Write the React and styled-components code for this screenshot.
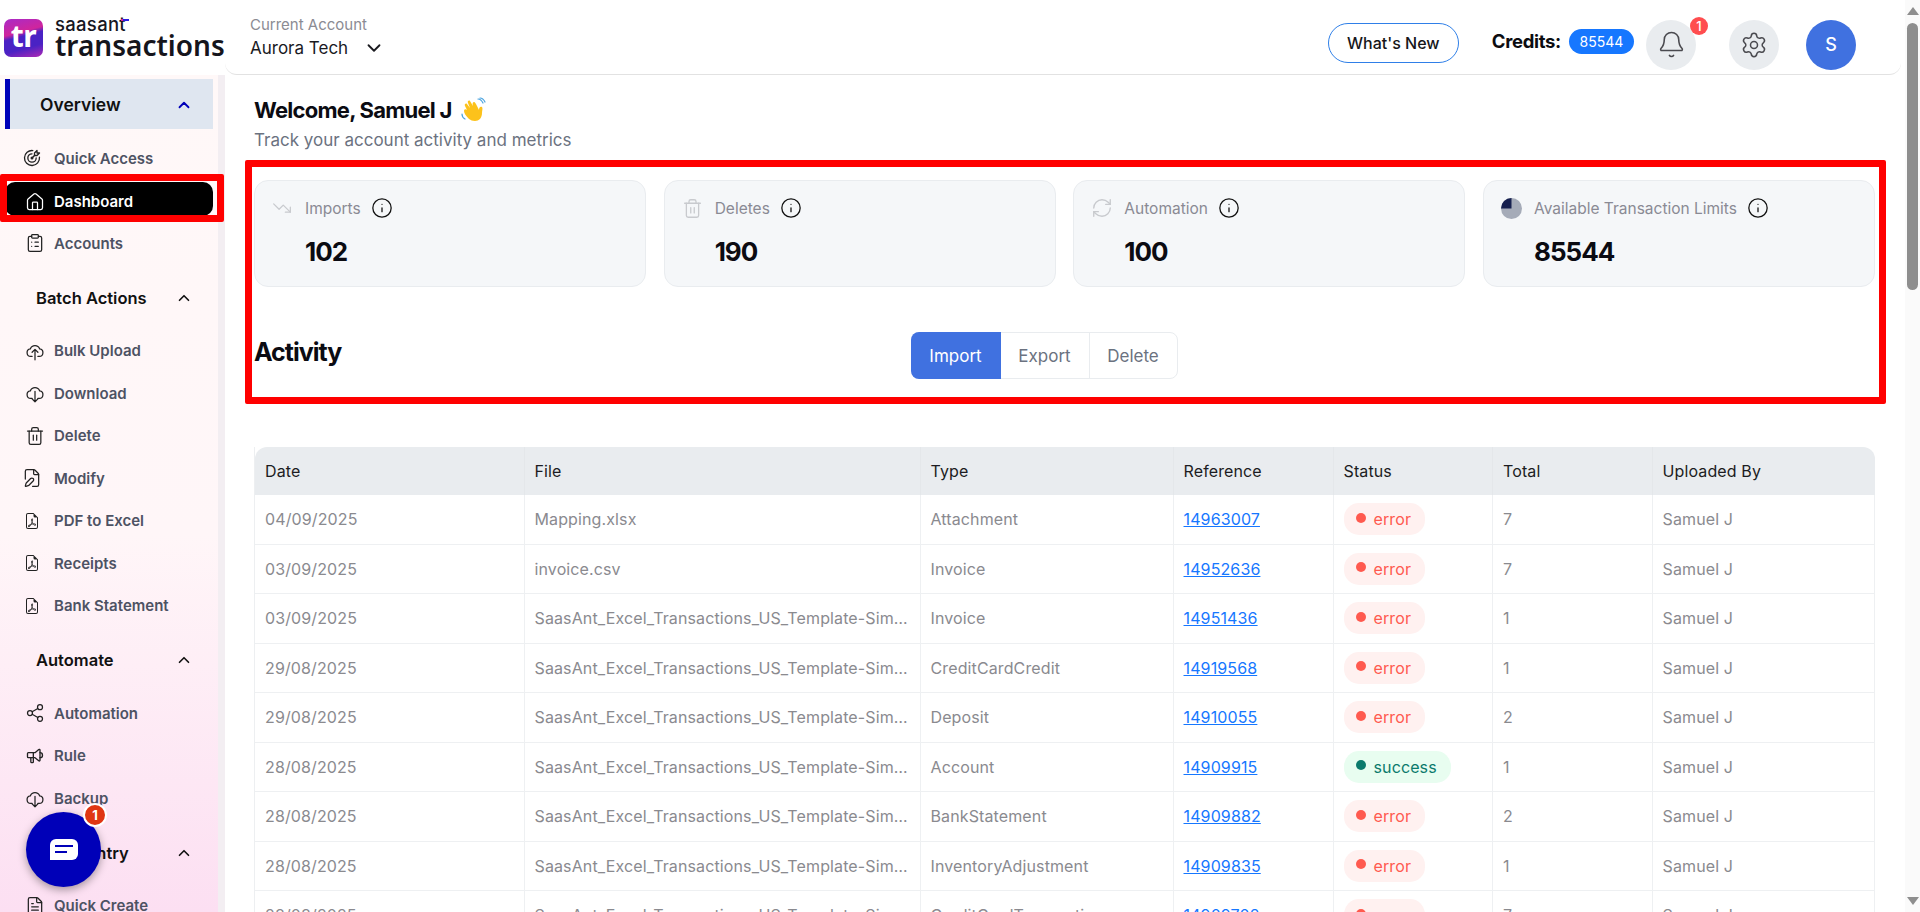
import React from "react";
import styled, { createGlobalStyle } from "styled-components";
import {
  Home, ClipboardList, Trash2, FilePen, Share2, FileText, ChevronUp, ChevronDown,
  Bell, Settings, Info, TrendingDown, RefreshCw,
} from "lucide-react";
import { TbTargetArrow, TbSpeakerphone } from "react-icons/tb";
import { BsFileEarmarkPdf } from "react-icons/bs";

const Global = createGlobalStyle`
  html, body { margin: 0; padding: 0; height: 100%; overflow: hidden; background: #fff; }
  body { font-family: Inter, "Liberation Sans", sans-serif; color: #111; }
  *, *::before, *::after { box-sizing: border-box; }
`;

const Page = styled.div`
  display: flex;
  width: 100%;
  height: 912px;
  overflow: hidden;
`;
const Shell = styled.div`
  flex: 1;
  min-width: 0;
  display: grid;
  grid-template-columns: 225px 1fr;
  grid-template-rows: 75px 837px;
`;

/* Brand */
const Brand = styled.div`
  display: flex;
  align-items: center;
  gap: 12px;
  padding: 0 0 0 4px;
  background: #fff;
`;
const LogoTile = styled.div`
  width: 39px;
  height: 38px;
  border-radius: 7px;
  display: flex;
  align-items: center;
  justify-content: center;
  color: #fff;
  font: 700 30px/1 "Noto Sans", sans-serif;
  letter-spacing: -0.5px;
  padding-bottom: 4px;
  background: linear-gradient(165deg, #a92bc8 0%, #d0259c 36%, #4a22c4 46%, #4a22c4 72%, #b02ab4 100%);
`;
const Wordmark = styled.div`
  display: flex;
  flex-direction: column;
`;
const Saasant = styled.span`
  position: relative;
  align-self: flex-start;
  font: 500 18.5px/15px Inter, sans-serif;
  letter-spacing: 0.3px;
  color: #17171f;
  &::after {
    content: "";
    position: absolute;
    right: -3px;
    top: 2px;
    width: 8px;
    height: 1.5px;
    background: linear-gradient(90deg, #e0249a 30%, #2a1ee0 30%);
  }
`;
const BrandName = styled.span`
  font: 600 28px/26px "Noto Sans", sans-serif;
  color: #15151c;
`;

/* Top bar */
const TopBar = styled.header`
  display: flex;
  align-items: center;
  margin-right: 4px;
  padding: 0 45px 0 25px;
  background: #fff;
  border-bottom: 1px solid #e2e2e2;
  border-radius: 0 0 12px 12px;
`;
const Account = styled.div`
  display: flex;
  flex-direction: column;
  gap: 3px;
  margin-top: 1px;
`;
const AccountLabel = styled.span`
  font-size: 15px;
  line-height: 18px;
  color: #8b8b93;
`;
const AccountName = styled.span`
  display: flex;
  align-items: center;
  gap: 15px;
  font-size: 17px;
  line-height: 21px;
  color: #1a1a1f;
`;
const Spacer = styled.div`
  flex: 1;
`;
const WhatsNew = styled.button`
  width: 131px;
  height: 40px;
  margin-top: 11px;
  margin-right: 33px;
  border: 1px solid #2f7fe8;
  border-radius: 20px;
  background: #fff;
  color: #16161a;
  font: 500 16px Inter, sans-serif;
`;
const Credits = styled.span`
  font-size: 18.5px;
  font-weight: 700;
  letter-spacing: -0.3px;
  color: #0c0c10;
  margin-right: 8px;
  margin-top: 8px;
`;
const CreditBadge = styled.span`
  width: 65px;
  height: 25px;
  margin-top: 9px;
  margin-right: 12px;
  border-radius: 13px;
  background: #1677ff;
  color: #fff;
  font-size: 14px;
  display: flex;
  align-items: center;
  justify-content: center;
`;
const RoundButton = styled.div`
  position: relative;
  width: 50px;
  height: 50px;
  border-radius: 50%;
  margin-right: ${(p) => p.$mr}px;
  margin-top: 15px;
  background: ${(p) => p.$bg || "#e9ecef"};
  color: ${(p) => p.$fg || "#4a4a4f"};
  font-size: 18px;
  font-weight: 500;
  display: flex;
  align-items: center;
  justify-content: center;
`;
const BellCount = styled.span`
  position: absolute;
  top: -3px;
  right: -12px;
  width: 18px;
  height: 18px;
  border-radius: 50%;
  background: #ff4d4f;
  color: #fff;
  font-size: 13px;
  font-weight: 500;
  display: flex;
  align-items: center;
  justify-content: center;
`;

/* Sidebar */
const Sidebar = styled.aside`
  display: flex;
  height: 837px;
  overflow: hidden;
  background: linear-gradient(180deg, #fff8f8 0%, #fff6f8 55%, #fcdff2 100%);
`;
const SideList = styled.nav`
  flex: 1;
  min-width: 0;
  padding-top: 4px;
`;
const SideTrack = styled.div`
  width: 7px;
  background: #f3eef2;
`;
const ActiveGroup = styled.div`
  display: flex;
  align-items: center;
  justify-content: space-between;
  height: 50px;
  width: 208px;
  margin: 0 0 8px 5px;
  padding: 1px 20px 0 30px;
  background: #dfe6f0;
  border-left: 5px solid #0000b8;
  font-size: 17.5px;
  font-weight: 600;
  color: #111;
`;
const GroupTitle = styled.div`
  display: flex;
  align-items: center;
  justify-content: space-between;
  height: 48px;
  margin: 9px 0 8px;
  padding: 0 25px 0 36px;
  font-size: 16.5px;
  font-weight: 600;
  color: #111;
`;
const NavRow = styled.div`
  display: flex;
  align-items: center;
  gap: 9px;
  height: 42.5px;
  padding-left: 25px;
  font-size: 15px;
  font-weight: 600;
  color: #4d5263;
`;
const NavIcon = styled.span`
  flex: none;
  width: 20px;
  display: flex;
  justify-content: center;
  color: ${(p) => (p.$light ? "#fff" : "#222")};
  transform: translateX(${(p) => p.$dx || 0}px);
`;
const ActiveFrame = styled.div`
  position: relative;
  height: 42.5px;
  padding-top: 2.5px;
  &::after {
    content: "";
    position: absolute;
    left: 0;
    top: -5.5px;
    width: 224px;
    height: 48px;
    border: 7px solid #ff0000;
    border-radius: 2px;
    pointer-events: none;
  }
`;
const ActiveRow = styled.div`
  display: flex;
  align-items: center;
  gap: 9px;
  height: 34px;
  width: 208px;
  margin-left: 5px;
  padding: 5px 0 0 20px;
  background: #000;
  border-radius: 10px;
  color: #fff;
  font-size: 15px;
  font-weight: 600;
`;

/* Chat launcher */
const ChatBubble = styled.div`
  position: absolute;
  left: 26px;
  top: 812px;
  width: 75px;
  height: 75px;
  border-radius: 50%;
  background: #0000b8;
  box-shadow: 0 3px 8px rgba(0, 0, 0, 0.35);
  display: flex;
  align-items: center;
  justify-content: center;
  z-index: 3;
`;
const ChatCount = styled.span`
  position: absolute;
  top: -9px;
  right: -6px;
  width: 24px;
  height: 24px;
  border-radius: 50%;
  border: 2px solid #fff;
  background: #e03613;
  color: #fff;
  font-size: 13px;
  font-weight: 700;
  display: flex;
  align-items: center;
  justify-content: center;
`;

/* Main */
const Main = styled.main`
  min-width: 0;
  height: 837px;
  overflow: hidden;
  padding: 21px 30px 0 30px;
  background: #fff;
`;
const Welcome = styled.h1`
  display: flex;
  align-items: center;
  gap: 9px;
  margin: 0 0 0 -1px;
  height: 28px;
  font-size: 22px;
  font-weight: 700;
  letter-spacing: -0.75px;
  color: #0b0b12;
`;
const Subtitle = styled.p`
  margin: 4px 0 0 -1px;
  height: 24px;
  font-size: 17px;
  line-height: 24px;
  color: #6b7280;
`;
const Highlight = styled.section`
  position: relative;
  margin: 28px 0 0 -1px;
  &::after {
    content: "";
    position: absolute;
    left: -9px;
    right: -11px;
    top: -20px;
    bottom: -25px;
    border: 7px solid #ff0000;
    border-radius: 2px;
    pointer-events: none;
  }
`;
const Cards = styled.div`
  display: grid;
  grid-template-columns: repeat(4, 1fr);
  gap: 17.67px;
`;
const Card = styled.div`
  height: 107px;
  padding: 15px 18px 0 17px;
  background: #f5f7f9;
  border: 1px solid #e9ecef;
  border-radius: 14px;
`;
const CardHead = styled.div`
  display: flex;
  align-items: center;
  height: 24px;
  font-size: 15.5px;
  color: #8a8a94;
`;
const CardIcon = styled.span`
  width: 33px;
  display: flex;
  color: #c8cace;
`;
const InfoIcon = styled(Info)`
  margin-left: 10px;
  color: #111;
`;
const CardValue = styled.div`
  margin: 16px 0 0 33px;
  font-size: 26px;
  line-height: 31px;
  font-weight: 700;
  letter-spacing: -1px;
  color: #0b0b12;
`;
const ActivityRow = styled.div`
  position: relative;
  display: flex;
  justify-content: center;
  margin-top: 45px;
  padding-right: 41px;
`;
const ActivityTitle = styled.h2`
  position: absolute;
  left: 0;
  top: 5px;
  margin: 0;
  font-size: 25px;
  line-height: 31px;
  font-weight: 700;
  letter-spacing: -1px;
  color: #0b0b12;
`;
const Tabs = styled.div`
  display: flex;
  height: 47px;
  border: 1px solid #e9ecef;
  border-radius: 8px;
`;
const Tab = styled.div`
  width: ${(p) => p.$w}px;
  display: flex;
  align-items: center;
  justify-content: center;
  font-size: 17px;
  color: ${(p) => (p.$active ? "#fff" : "#6b7280")};
  background: ${(p) => (p.$active ? "#4071e0" : "transparent")};
  border-radius: ${(p) => (p.$active ? "8px 0 0 8px" : "0")};
  margin: ${(p) => (p.$active ? "-1px 0 -1px -1px" : "0")};
  border-left: ${(p) => (p.$divided ? "1px solid #e9ecef" : "0")};
`;
const Table = styled.table`
  width: 1620px;
  margin: 68px 0 0 -1px;
  table-layout: fixed;
  border-collapse: separate;
  border-spacing: 0;
  font-size: 16px;
  letter-spacing: 0.12px;
  border-left: 1px solid #edeff1;
`;
const Th = styled.th`
  height: 48px;
  padding: 0 10px;
  text-align: left;
  font-weight: 400;
  color: #1c1c22;
  background: #e9ecef;
  &:first-child { border-top-left-radius: 12px; }
  &:last-child { border-top-right-radius: 12px; }
  & + & { border-left: 1px solid #e4e7ea; }
`;
const Td = styled.td`
  height: 49.5px;
  padding: 0 10px;
  color: #8a8a8f;
  white-space: nowrap;
  overflow: hidden;
  text-overflow: ellipsis;
  border-bottom: 1px solid #eef0f2;
  & + & { border-left: 1px solid #eef0f2; }
  &:last-child { border-right: 1px solid #eef0f2; }
`;
const RefLink = styled.a`
  color: #1677ff;
  text-decoration: underline;
`;
const Status = styled.span`
  display: inline-flex;
  align-items: center;
  gap: 8px;
  height: 32px;
  padding: 0 14px 0 12px;
  border-radius: 15px;
  background: ${(p) => (p.$ok ? "#e8fdf0" : "#fff1f0")};
  color: ${(p) => (p.$ok ? "#0b7a6c" : "#ff5a4f")};
  vertical-align: middle;
  &::before {
    content: "";
    width: 10px;
    height: 10px;
    margin-top: -3px;
    border-radius: 50%;
    background: currentColor;
  }
`;

/* Window scrollbar as shown in the picture */
const ScrollRail = styled.div`
  flex: none;
  width: 15px;
  height: 912px;
  display: flex;
  flex-direction: column;
  align-items: center;
  background: #fafafa;
`;
const ScrollArrowUp = styled.div`
  margin-top: 7px;
  border-left: 6px solid transparent;
  border-right: 6px solid transparent;
  border-bottom: 8px solid #8e8e8e;
`;
const ScrollThumb = styled.div`
  width: 11px;
  height: 267px;
  margin-top: 8px;
  border-radius: 6px;
  background: #8e8e8e;
`;
const ScrollArrowDown = styled.div`
  margin-top: auto;
  margin-bottom: 7px;
  border-left: 6px solid transparent;
  border-right: 6px solid transparent;
  border-top: 8px solid #8e8e8e;
`;

const Wave = () => (
  <svg width="26" height="26" viewBox="0 0 26 26" aria-hidden="true">
    <path d="M8 22c-3-3-5-6-5-8s2-2 3-1l-2-4c-1-2 1-3 2-2l3 4-2-5c-1-2 1-3 2-2l3 5c-1-3 0-4 1-4s2 2 3 4l2 4c0-2 1-4 3-3 1 1 0 4 0 6 0 5-3 8-7 8-3 0-4-1-6-2z" fill="#fcc21b" />
    <path d="M17 2c2 0 4 2 5 4M19 1c2 0 4 2 5 4M1 17c0 2 1 4 3 5" stroke="#4aa3df" strokeWidth="1.2" fill="none" strokeLinecap="round" />
  </svg>
);
const Pie = () => (
  <svg width="21" height="21" viewBox="0 0 22 22" aria-hidden="true">
    <circle cx="11" cy="11" r="11" fill="#a5abb8" />
    <path d="M11 11V0A11 11 0 0 0 0 11z" fill="#16204f" />
  </svg>
);
const ChatGlyph = () => (
  <svg width="28" height="21" viewBox="0 0 28 21" aria-hidden="true">
    <path d="M6 0h16a6 6 0 0 1 6 6v9a6 6 0 0 1-6 6H0V6a6 6 0 0 1 6-6z" fill="#fff" />
    <path d="M5 7h18M5 13h12" stroke="#0000b8" strokeWidth="2" />
  </svg>
);
const CLOUD = "M8.5 18.5H7a4.5 4.5 0 0 1-.6-8.96 6 6 0 0 1 11.2 0A4.5 4.5 0 0 1 17 18.5h-1.5";
const CloudUp = ({ size }) => (
  <svg width={size} height={size} viewBox="0 0 24 24" fill="none" stroke="currentColor" strokeWidth="1.5" strokeLinecap="round" strokeLinejoin="round" aria-hidden="true">
    <path d={CLOUD} />
    <path d="M12 22.5V10M8.5 13.5 12 10l3.5 3.5" />
  </svg>
);
const CloudDown = ({ size }) => (
  <svg width={size} height={size} viewBox="0 0 24 24" fill="none" stroke="currentColor" strokeWidth="1.5" strokeLinecap="round" strokeLinejoin="round" aria-hidden="true">
    <path d={CLOUD} />
    <path d="M12 10v12.5M8.5 19l3.5 3.5 3.5-3.5" />
  </svg>
);
const Pdf = ({ size }) => <BsFileEarmarkPdf size={size} />;

const Lined = (Icon, w) => ({ size }) => <Icon size={size} strokeWidth={w} />;
const NavItem = ({ icon: Icon, label, size = 22, dx }) => (
  <NavRow>
    <NavIcon $dx={dx}><Icon size={size} /></NavIcon>
    {label}
  </NavRow>
);

const Group = ({ title }) => (
  <GroupTitle>
    {title}
    <ChevronUp size={18} strokeWidth={2.2} />
  </GroupTitle>
);

const LONG = "SaasAnt_Excel_Transactions_US_Template-Simple.xlsx";
const rows = [
  ["04/09/2025", "Mapping.xlsx", "Attachment", "14963007", "error", "7"],
  ["03/09/2025", "invoice.csv", "Invoice", "14952636", "error", "7"],
  ["03/09/2025", LONG, "Invoice", "14951436", "error", "1"],
  ["29/08/2025", LONG, "CreditCardCredit", "14919568", "error", "1"],
  ["29/08/2025", LONG, "Deposit", "14910055", "error", "2"],
  ["28/08/2025", LONG, "Account", "14909915", "success", "1"],
  ["28/08/2025", LONG, "BankStatement", "14909882", "error", "2"],
  ["28/08/2025", LONG, "InventoryAdjustment", "14909835", "error", "1"],
  ["28/08/2025", LONG, "CreditCardTransaction", "14909702", "error", "7"],
];
const widths = [268.5, 396, 253, 160, 159.5, 159.5, 223.5];
const heads = ["Date", "File", "Type", "Reference", "Status", "Total", "Uploaded By"];

const TargetI = Lined(TbTargetArrow, 1.6);
const ClipI = Lined(ClipboardList, 1.5);
const TrashI = Lined(Trash2, 1.5);
const PenI = Lined(FilePen, 1.5);
const ShareI = Lined(Share2, 1.5);
const HornI = Lined(TbSpeakerphone, 1.6);
const FileI = Lined(FileText, 1.5);

const stats = [
  [<TrendingDown key="a" size={20} strokeWidth={1.5} />, "Imports", "102"],
  [<Trash2 key="b" size={21} strokeWidth={1.5} />, "Deletes", "190"],
  [<RefreshCw key="c" size={22} strokeWidth={1.5} />, "Automation", "100"],
  [<Pie key="d" />, "Available Transaction Limits", "85544"],
];

export default function App() {
  return (
    <>
      <Global />
      <Page>
        <Shell>
          <Brand>
            <LogoTile>tr</LogoTile>
            <Wordmark>
              <Saasant>saasant</Saasant>
              <BrandName>transactions</BrandName>
            </Wordmark>
          </Brand>
          <TopBar>
            <Account>
              <AccountLabel>Current Account</AccountLabel>
              <AccountName>
                Aurora Tech <ChevronDown size={22} strokeWidth={2} />
              </AccountName>
            </Account>
            <Spacer />
            <WhatsNew>What's New</WhatsNew>
            <Credits>Credits:</Credits>
            <CreditBadge>85544</CreditBadge>
            <RoundButton $mr={33}>
              <Bell size={29} strokeWidth={1.3} />
              <BellCount>1</BellCount>
            </RoundButton>
            <RoundButton $mr={27}>
              <Settings size={28} strokeWidth={1.3} />
            </RoundButton>
            <RoundButton $mr={0} $bg="#4071e0" $fg="#fff">S</RoundButton>
          </TopBar>
          <Sidebar>
            <SideList>
              <ActiveGroup>
                Overview
                <ChevronUp size={18} strokeWidth={2.4} color="#0000b8" />
              </ActiveGroup>
              <NavItem icon={TargetI} label="Quick Access" dx={-3} />
              <ActiveFrame>
                <ActiveRow>
                  <NavIcon $light><Home size={22} strokeWidth={1.5} /></NavIcon>
                  Dashboard
                </ActiveRow>
              </ActiveFrame>
              <NavItem icon={ClipI} label="Accounts" />
              <Group title="Batch Actions" />
              <NavItem icon={CloudUp} label="Bulk Upload" />
              <NavItem icon={CloudDown} label="Download" />
              <NavItem icon={TrashI} label="Delete" />
              <NavItem icon={PenI} label="Modify" dx={-3} />
              <NavItem icon={Pdf} label="PDF to Excel" size={16} dx={-3} />
              <NavItem icon={Pdf} label="Receipts" size={16} dx={-3} />
              <NavItem icon={Pdf} label="Bank Statement" size={16} dx={-3} />
              <Group title="Automate" />
              <NavItem icon={ShareI} label="Automation" size={24} />
              <NavItem icon={HornI} label="Rule" />
              <NavItem icon={CloudDown} label="Backup" />
              <Group title="Quick Entry" />
              <NavItem icon={FileI} label="Quick Create" />
            </SideList>
            <SideTrack />
          </Sidebar>
          <Main>
            <Welcome>
              Welcome, Samuel J <Wave />
            </Welcome>
            <Subtitle>Track your account activity and metrics</Subtitle>
            <Highlight>
              <Cards>
                {stats.map(([icon, label, value]) => (
                  <Card key={label}>
                    <CardHead>
                      <CardIcon>{icon}</CardIcon>
                      {label}
                      <InfoIcon size={22} strokeWidth={1.4} />
                    </CardHead>
                    <CardValue>{value}</CardValue>
                  </Card>
                ))}
              </Cards>
              <ActivityRow>
                <ActivityTitle>Activity</ActivityTitle>
                <Tabs>
                  <Tab $active $w={90}>Import</Tab>
                  <Tab $w={88}>Export</Tab>
                  <Tab $divided $w={88}>Delete</Tab>
                </Tabs>
              </ActivityRow>
            </Highlight>
            <Table>
              <colgroup>
                {widths.map((w, i) => <col key={i} width={w} />)}
              </colgroup>
              <thead>
                <tr>{heads.map((h) => <Th key={h}>{h}</Th>)}</tr>
              </thead>
              <tbody>
                {rows.map((r) => (
                  <tr key={r[3]}>
                    <Td>{r[0]}</Td>
                    <Td>{r[1]}</Td>
                    <Td>{r[2]}</Td>
                    <Td><RefLink href="#">{r[3]}</RefLink></Td>
                    <Td><Status $ok={r[4] === "success"}>{r[4]}</Status></Td>
                    <Td>{r[5]}</Td>
                    <Td>Samuel J</Td>
                  </tr>
                ))}
              </tbody>
            </Table>
          </Main>
        </Shell>
        <ScrollRail>
          <ScrollArrowUp />
          <ScrollThumb />
          <ScrollArrowDown />
        </ScrollRail>
        <ChatBubble>
          <ChatGlyph />
          <ChatCount>1</ChatCount>
        </ChatBubble>
      </Page>
    </>
  );
}
